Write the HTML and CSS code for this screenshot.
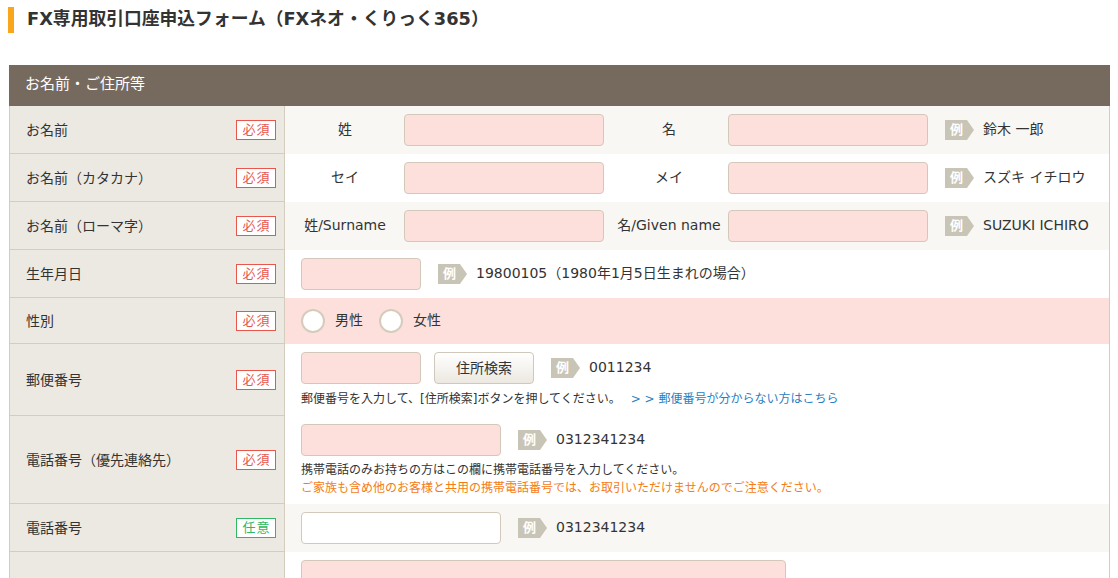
FILE: index.html
```html
<!DOCTYPE html>
<html lang="ja">
<head>
<meta charset="utf-8">
<title>FX専用取引口座申込フォーム</title>
<link rel="stylesheet" href="styles.css">
</head>
<body>
<div class="page">
  <h1 class="title">FX専用取引口座申込フォーム（FXネオ・くりっく365）</h1>
  <section class="form-section">
    <h2 class="section-head">お名前・ご住所等</h2>
    <div class="form-table">

      <div class="row alt">
        <div class="th"><span class="th-label">お名前</span><span class="req">必須</span></div>
        <div class="td">
          <div class="line">
            <span class="sub sub1">姓</span><input class="field pink w200" type="text">
            <span class="sub sub2">名</span><input class="field pink w200" type="text">
            <span class="ex">例</span><span class="ex-text">鈴木 一郎</span>
          </div>
        </div>
      </div>

      <div class="row">
        <div class="th"><span class="th-label">お名前（カタカナ）</span><span class="req">必須</span></div>
        <div class="td">
          <div class="line">
            <span class="sub sub1">セイ</span><input class="field pink w200" type="text">
            <span class="sub sub2">メイ</span><input class="field pink w200" type="text">
            <span class="ex">例</span><span class="ex-text">スズキ イチロウ</span>
          </div>
        </div>
      </div>

      <div class="row alt">
        <div class="th"><span class="th-label">お名前（ローマ字）</span><span class="req">必須</span></div>
        <div class="td">
          <div class="line">
            <span class="sub sub1">姓/Surname</span><input class="field pink w200" type="text">
            <span class="sub sub2">名/Given name</span><input class="field pink w200" type="text">
            <span class="ex">例</span><span class="ex-text">SUZUKI ICHIRO</span>
          </div>
        </div>
      </div>

      <div class="row">
        <div class="th"><span class="th-label">生年月日</span><span class="req">必須</span></div>
        <div class="td">
          <div class="line">
            <input class="field pink w120" type="text">
            <span class="ex">例</span><span class="ex-text">19800105（1980年1月5日生まれの場合）</span>
          </div>
        </div>
      </div>

      <div class="row radio-row">
        <div class="th"><span class="th-label">性別</span><span class="req">必須</span></div>
        <div class="td">
          <div class="line">
            <label class="radio"><input type="radio" name="sex"><span>男性</span></label>
            <label class="radio"><input type="radio" name="sex"><span>女性</span></label>
          </div>
        </div>
      </div>

      <div class="row">
        <div class="th"><span class="th-label">郵便番号</span><span class="req">必須</span></div>
        <div class="td">
          <div class="line">
            <input class="field pink w120" type="text">
            <button class="btn" type="button">住所検索</button>
            <span class="ex">例</span><span class="ex-text">0011234</span>
          </div>
          <p class="note note-zip">郵便番号を入力して、[住所検索]ボタンを押してください。<a class="link" href="#">&gt; &gt; 郵便番号が分からない方はこちら</a></p>
        </div>
      </div>

      <div class="row">
        <div class="th"><span class="th-label">電話番号（優先連絡先）</span><span class="req">必須</span></div>
        <div class="td td-tel">
          <div class="line">
            <input class="field pink w200" type="text">
            <span class="ex">例</span><span class="ex-text">0312341234</span>
          </div>
          <p class="note">携帯電話のみお持ちの方はこの欄に携帯電話番号を入力してください。<br><span class="warn">ご家族も含め他のお客様と共用の携帯電話番号では、お取引いただけませんのでご注意ください。</span></p>
        </div>
      </div>

      <div class="row alt">
        <div class="th"><span class="th-label">電話番号</span><span class="opt">任意</span></div>
        <div class="td">
          <div class="line">
            <input class="field w200" type="text">
            <span class="ex">例</span><span class="ex-text">0312341234</span>
          </div>
        </div>
      </div>

      <div class="row tall">
        <div class="th"></div>
        <div class="td">
          <div class="line">
            <input class="field pink w485" type="text">
          </div>
        </div>
      </div>

    </div>
  </section>
</div>
</body>
</html>
```
FILE: styles.css
```css
* {
  box-sizing: border-box;
}

html, body {
  margin: 0;
  padding: 0;
  background: #ffffff;
}

body {
  font-family: "DejaVu Sans", "Noto Sans CJK JP", sans-serif;
  font-size: 14px;
  color: #333333;
}

.page {
  padding: 7px 0 0 8px;
  width: 1110px;
}

.title {
  margin: 0;
  height: 26px;
  border-left: 6px solid #f9a61c;
  padding-left: 13px;
  font-size: 17.8px;
  line-height: 24px;
  font-weight: bold;
  color: #333333;
}

.form-section {
  margin: 32px 0 0 1px;
  width: 1101px;
}

.section-head {
  margin: 0;
  height: 41px;
  background: #766a5e;
  color: #ffffff;
  font-size: 15px;
  font-weight: normal;
  line-height: 39px;
  padding-left: 16px;
}

.form-table {
  border-left: 1px solid #d4ccbd;
  border-right: 1px solid #d4ccbd;
}

.row {
  display: grid;
  grid-template-columns: 275px 1fr;
}

.th {
  background: #ece9e2;
  border-right: 1px solid #d4ccbd;
  border-bottom: 1px solid #d4ccbd;
  display: flex;
  align-items: center;
  justify-content: space-between;
  padding: 0 8px 0 16px;
}

.th-label {
  font-size: 14px;
  margin-top: -2px;
}

.req,
.opt {
  width: 40px;
  height: 20px;
  border: 1px solid #e8574c;
  background: #ffffff;
  color: #e5574d;
  font-size: 13px;
  line-height: 18px;
  text-align: center;
  letter-spacing: 1px;
  text-indent: 1px;
}

.opt {
  border-color: #30b862;
  color: #30b862;
}

.td {
  padding: 8px 16px;
  background: #ffffff;
}

.row.alt .td {
  background: #f8f7f3;
}

.radio-row .td {
  background: #fde0dc;
  padding: 11px 16px;
}

.td-tel {
  padding-bottom: 7px;
}

.tall .td {
  height: 200px;
}

.line {
  display: flex;
  align-items: center;
  min-height: 24px;
}

.line > span,
.radio span {
  line-height: 18px;
  margin-top: -2px;
}

.sub {
  text-align: center;
  white-space: nowrap;
}

.sub1 {
  width: 88px;
  margin-right: 15px;
}

.sub2 {
  width: 110px;
  margin: 0 4px 0 10px;
}

.field {
  height: 32px;
  border: 1px solid #d3c9ba;
  border-radius: 4px;
  background: #ffffff;
  padding: 0 8px;
  font: inherit;
  margin: 0;
}

.field.pink {
  background: #fde0dc;
}

.w120 { width: 120px; }
.w200 { width: 200px; }
.w485 { width: 485px; }

.line > .ex {
  margin-left: 17px;
  margin-top: 0;
  width: 29px;
  height: 20px;
  background: #c9c5b6;
  color: #ffffff;
  font-size: 13px;
  font-weight: bold;
  line-height: 20px;
  padding-left: 5px;
  clip-path: polygon(0 0, 22px 0, 29px 50%, 22px 100%, 0 100%);
}

.ex-text {
  margin-left: 9px;
  white-space: nowrap;
}

.btn {
  margin-left: 13px;
  width: 100px;
  height: 32px;
  border: 1px solid #cfc8bb;
  border-radius: 4px;
  background: linear-gradient(#ffffff, #ece8e1);
  font: inherit;
  color: #333333;
  padding: 0 0 2px 0;
}

.radio {
  display: flex;
  align-items: center;
  margin-right: 16px;
}

.radio input {
  appearance: none;
  -webkit-appearance: none;
  width: 24px;
  height: 24px;
  margin: 0 10px 0 0;
  border: 2px solid #d6ccbc;
  border-radius: 50%;
  background: #ffffff;
}

.note {
  margin: 6px 0 0 0;
  font-size: 12px;
  line-height: 18px;
}

.td-tel .note {
  margin-top: 5px;
}

.link {
  margin-left: 10px;
  color: #2a7fc1;
  text-decoration: none;
}

.warn {
  color: #f57c14;
}
```
